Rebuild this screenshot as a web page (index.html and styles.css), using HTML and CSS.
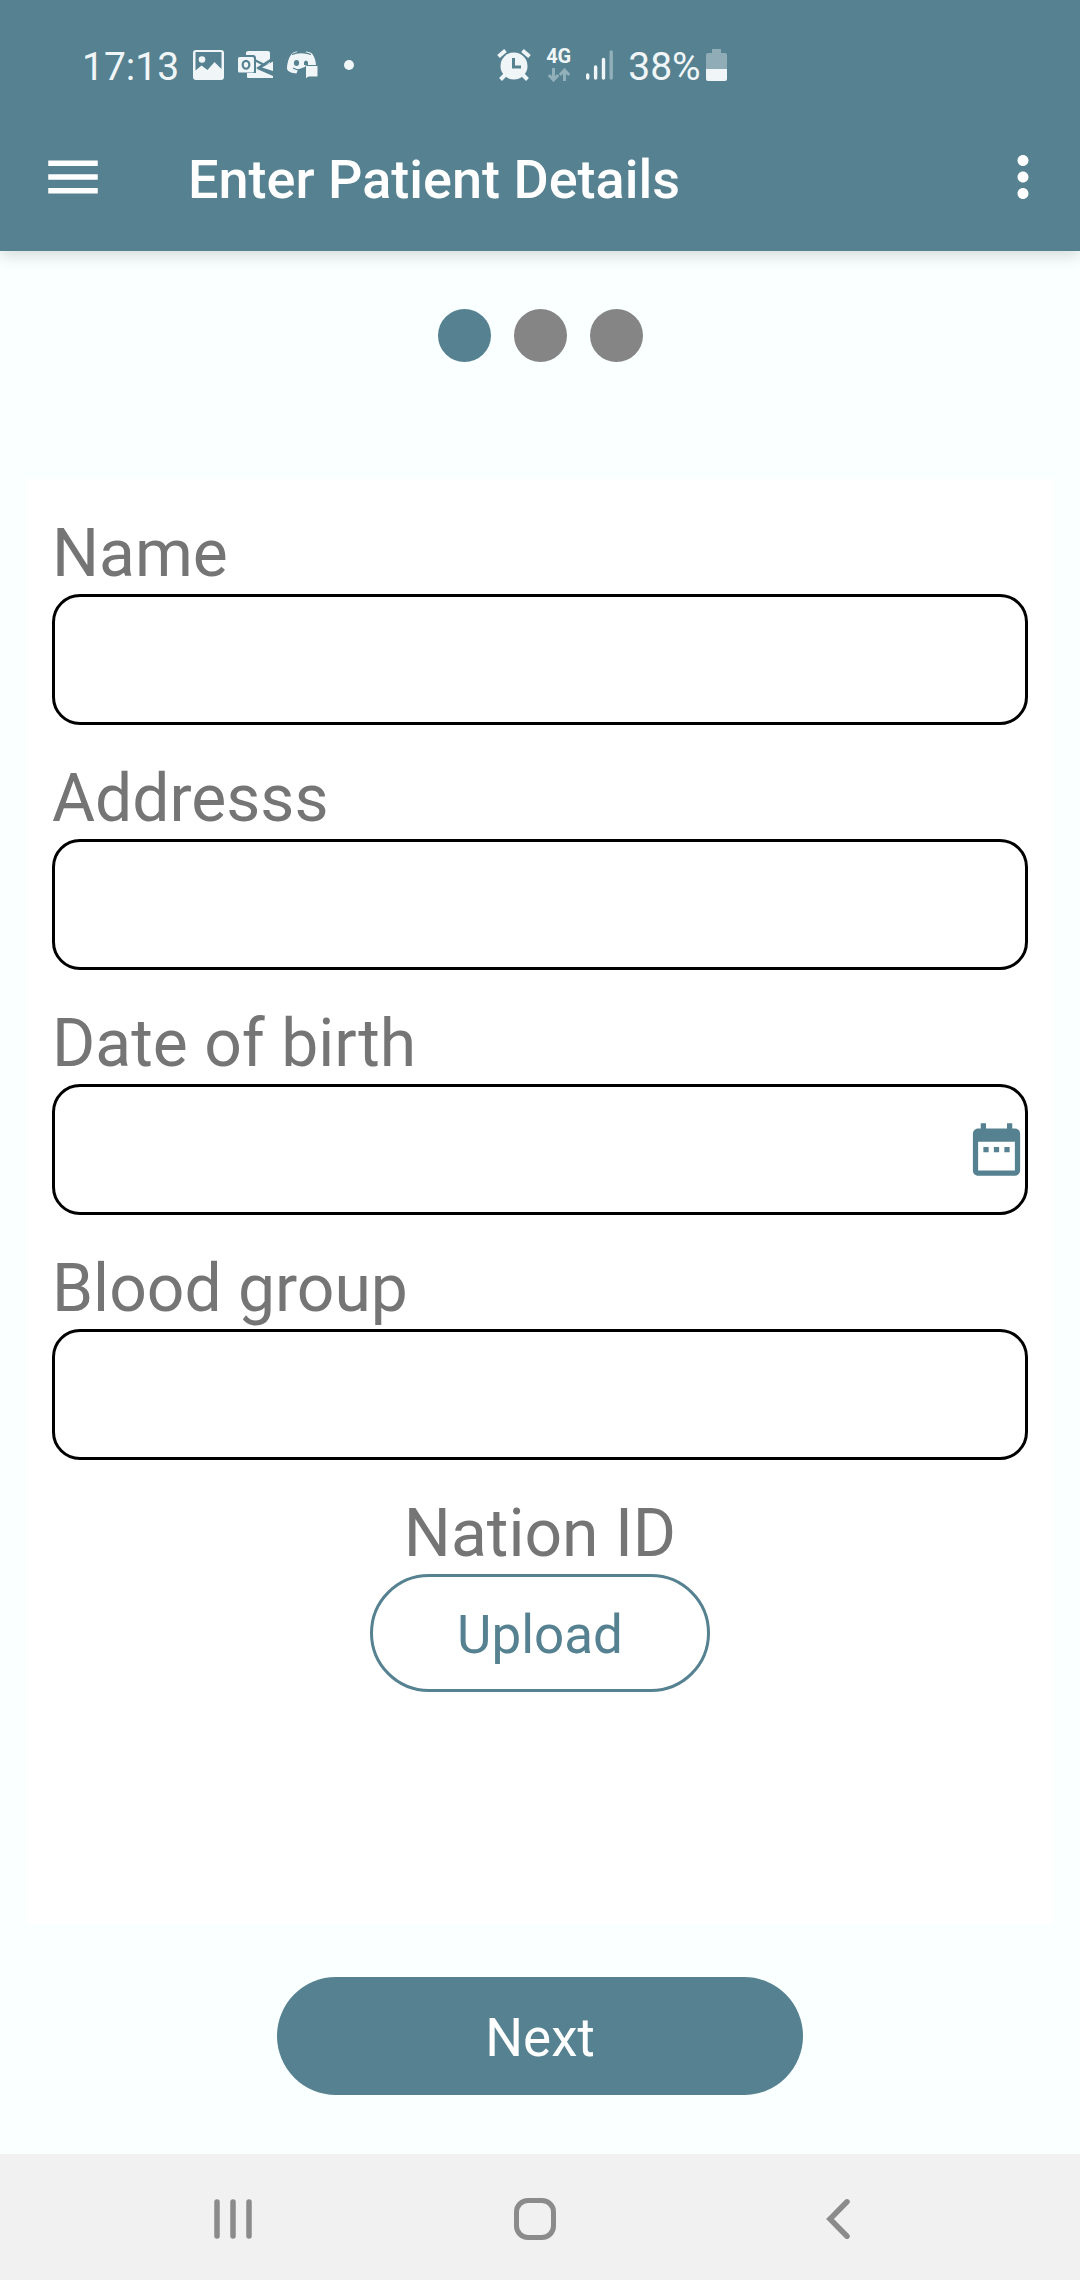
FILE: index.html
```html
<!DOCTYPE html>
<html lang="en">
<head>
  <meta charset="utf-8">
  <meta name="viewport" content="width=device-width, initial-scale=1">
  <title>Enter Patient Details</title>
  <link rel="stylesheet" href="styles.css">
</head>
<body class="screen">
  <header class="top">
    <div class="status">
      <div class="status-group">
        <span class="status-text">17:13</span>
        <svg width="31" height="30" viewBox="0 0 31 30" fill="currentColor" aria-hidden="true">
          <path fill-rule="evenodd" d="M3 0h25a3 3 0 0 1 3 3v24a3 3 0 0 1-3 3H3a3 3 0 0 1-3-3V3a3 3 0 0 1 3-3zM2.500 2v18.500l6-5 6 4.500 7-8 7 7V2z"/>
          <circle cx="9" cy="9.500" r="3.300"/>
        </svg>
        <svg width="35" height="28" viewBox="0 0 35 28" aria-hidden="true">
          <path fill="currentColor" d="M10 0h20a2 2 0 0 1 2 2v10l-13 6 15 9H10a1 1 0 0 1-1-1v-4h8V6H8V1z"/>
          <path fill="#558190" d="M17 8l18 9v2.500L17 10.500zM18 17l14-9v3L21 18.500z"/>
          <path fill="currentColor" d="M24 16.500l11-6v9.500zM19 18l16 7v2h-5z"/>
          <path fill="#558190" d="M8 4h7a3 3 0 0 1 3 3v15H8z"/>
          <rect y="6" width="16" height="15.500" rx="1.500" fill="currentColor"/>
          <ellipse cx="8" cy="13.700" rx="3.300" ry="3.900" fill="none" stroke="#558190" stroke-width="2.200"/>
        </svg>
        <svg width="31" height="28" viewBox="0 0 31 28" aria-hidden="true">
          <path fill="currentColor" d="M5 2.500C7 1 9 .5 10 .5l1 1.500h7L19 .5c2 0 5 1 6 2 3 4 4 8 4 13H19l-8 3-1.500 4C5 22 1 21 0 18 0 12 2 6 5 2.500z"/>
          <path d="M5 3.500q9-4 19 0M6 17q3 2 8 2" fill="none" stroke="#558190" stroke-width="1.300"/>
          <ellipse cx="9.500" cy="12" rx="2.600" ry="2.900" fill="#558190"/>
          <path fill="#558190" d="M17 11q2-3 4 0v3h-4z"/>
          <path fill="currentColor" stroke="#558190" stroke-width="1" d="M19.500 14.500H30a1 1 0 0 1 1 1V25a1 1 0 0 1-1 1h-8.500L18.500 28V15.500a1 1 0 0 1 1-1z"/>
        </svg>
        <svg width="34" height="10" viewBox="0 0 34 10" aria-hidden="true"><circle cx="17" cy="5" r="5" fill="currentColor"/></svg>
      </div>
      <div class="status-group status-group-wide">
        <svg width="34" height="32" viewBox="0 0 34 32" aria-hidden="true">
          <g stroke="currentColor" fill="none">
            <path d="M1.500 7.500l7-6M32.500 7.500l-7-6" stroke-width="4"/>
            <path d="M8 26l-4.500 4.500M26 26l4.500 4.500" stroke-width="4"/>
          </g>
          <circle cx="17" cy="17" r="13.500" fill="currentColor"/>
          <path d="M16.500 9v9h7.500" fill="none" stroke="#558190" stroke-width="3"/>
        </svg>
        <span class="network">
          <span class="network-type">4G</span>
          <svg width="22" height="14" viewBox="0 0 22 14" fill="none" stroke="#91b0ba" stroke-width="3" aria-hidden="true">
            <path d="M5.500 0v12M.8 7l4.700 5 4.700-5M16.500 13V2M11.800 7l4.700-5 4.700 5"/>
          </svg>
        </span>
        <svg width="27" height="30" viewBox="0 0 27 30" stroke-width="3.400" stroke-linecap="round" aria-hidden="true">
          <path stroke="currentColor" d="M1.700 25v3M9.600 17v11M17.500 9.500V28"/>
          <path stroke="#91b0ba" d="M25.200 2v26"/>
        </svg>
        <span class="battery">
          <span class="status-text">38%</span>
          <svg width="21" height="32" viewBox="0 0 21 32" aria-hidden="true">
            <path fill="#8facb7" d="M6 0h9v4h4a2 2 0 0 1 2 2v14H0V6a2 2 0 0 1 2-2h4z"/>
            <path fill="currentColor" d="M0 20h21v10a2 2 0 0 1-2 2H2a2 2 0 0 1-2-2z"/>
          </svg>
        </span>
      </div>
    </div>
    <div class="app-bar">
      <button class="icon-button" type="button" aria-label="Open menu">
        <svg width="66" height="66" viewBox="0 0 24 24" fill="currentColor"><path d="M3 18h18v-2H3v2zm0-5h18v-2H3v2zm0-7v2h18V6H3z"/></svg>
      </button>
      <h1 class="title">Enter Patient Details</h1>
      <button class="icon-button" type="button" aria-label="More options">
        <svg width="66" height="66" viewBox="0 0 24 24" fill="currentColor"><path d="M12 8c1.100 0 2-.9 2-2s-.9-2-2-2-2 .9-2 2 .9 2 2 2zm0 2c-1.100 0-2 .9-2 2s.9 2 2 2 2-.9 2-2-.9-2-2-2zm0 6c-1.100 0-2 .9-2 2s.9 2 2 2 2-.9 2-2-.9-2-2-2z"/></svg>
      </button>
    </div>
  </header>

  <form class="content">
    <div class="steps" role="img" aria-label="Step 1 of 3">
      <span class="step step-active"></span>
      <span class="step"></span>
      <span class="step"></span>
    </div>

    <div class="card">
      <div class="field">
        <label class="label" for="name">Name</label>
        <input class="input" id="name" type="text">
      </div>
      <div class="field">
        <label class="label" for="address">Addresss</label>
        <input class="input" id="address" type="text">
      </div>
      <div class="field">
        <label class="label" for="birth">Date of birth</label>
        <div class="date">
          <input class="input" id="birth" type="text">
          <svg class="date-icon" width="63" height="63" viewBox="0 0 24 24" fill="currentColor" aria-hidden="true"><path d="M9 11H7v2h2v-2zm4 0h-2v2h2v-2zm4 0h-2v2h2v-2zm2-7h-1V2h-2v2H8V2H6v2H5c-1.110 0-1.990.9-1.990 2L3 20c0 1.100.89 2 2 2h14c1.100 0 2-.9 2-2V6c0-1.100-.9-2-2-2zm0 16H5V9h14v11z"/></svg>
        </div>
      </div>
      <div class="field">
        <label class="label" for="blood">Blood group</label>
        <input class="input" id="blood" type="text">
      </div>
      <div class="field field-centered">
        <label class="label" for="upload">Nation ID</label>
        <button class="button button-outline" id="upload" type="button">Upload</button>
      </div>
    </div>

    <div class="actions">
      <button class="button button-filled" type="button">Next</button>
    </div>
  </form>

  <nav class="nav" aria-label="System">
    <button class="icon-button" type="button" aria-label="Recent apps">
      <svg width="42" height="42" viewBox="0 0 42 42" stroke="currentColor" stroke-width="5.500" stroke-linecap="round"><path d="M5 4v34M21 4v34M37 4v34"/></svg>
    </button>
    <button class="icon-button" type="button" aria-label="Home">
      <svg width="42" height="42" viewBox="0 0 42 42" fill="none" stroke="currentColor" stroke-width="5"><rect x="2.500" y="2.500" width="37" height="37" rx="11.500"/></svg>
    </button>
    <button class="icon-button" type="button" aria-label="Back">
      <svg width="42" height="42" viewBox="0 0 42 42" fill="none" stroke="currentColor" stroke-width="5.500" stroke-linecap="round"><path d="M30 3.800L13 21l17 17.200"/></svg>
    </button>
  </nav>
</body>
</html>
```
FILE: styles.css
```css
:root {
  --primary: #558190;
  --page: #faffff;
  --label: #757575;
  --gutter: 26px;
}

* {
  box-sizing: border-box;
}

.screen {
  display: flex;
  flex-direction: column;
  min-height: 100vh;
  margin: 0;
  background: var(--page);
  font-family: Roboto, "Noto Sans", sans-serif;
}

.top {
  background: var(--primary);
  color: #fff;
  box-shadow: 0 4px 16px rgba(0, 0, 0, 0.16);
}

.status {
  display: flex;
  align-items: center;
  gap: 131px;
  height: 97px;
  padding: 32px 82px 0;
  color: #f0f6f8;
  font-size: 39px;
  line-height: 48px;
}

.status-group {
  display: flex;
  align-items: center;
  gap: 14px;
}

.status-group-wide {
  gap: 15px;
}

.status-text {
  padding-top: 4px;
}

.network {
  display: flex;
  flex-direction: column;
  align-items: center;
  gap: 4px;
}

.network-type {
  font-size: 20px;
  font-weight: 700;
  line-height: 16px;
}

.battery {
  display: flex;
  align-items: center;
  gap: 5px;
}

.app-bar {
  display: flex;
  align-items: center;
  height: 154px;
  padding: 6px 24px 0 40px;
}

.icon-button {
  display: flex;
  padding: 0;
  border: 0;
  background: none;
  color: inherit;
}

.title {
  flex: 1;
  margin: 0;
  padding: 6px 0 0 82px;
  font-size: 54px;
  font-weight: 500;
  line-height: 64px;
}

.content {
  display: flex;
  flex: 1;
  flex-direction: column;
}

.steps {
  display: flex;
  justify-content: center;
  gap: 23px;
  padding: 58px 0 117px;
}

.step {
  width: 53px;
  height: 53px;
  border-radius: 50%;
  background: #858585;
}

.step-active {
  background: var(--primary);
}

.card {
  display: flex;
  flex: 1;
  flex-direction: column;
  gap: 35px;
  margin: 0 var(--gutter);
  padding: 36px var(--gutter);
  background: #fff;
}

.field {
  display: flex;
  flex-direction: column;
}

.field-centered {
  align-items: center;
}

.label {
  padding-bottom: 2px;
  color: var(--label);
  font-size: 66px;
  line-height: 77px;
}

.input {
  width: 100%;
  height: 131px;
  padding: 0 28px;
  border: 3px solid #000;
  border-radius: 28px;
  background: #fff;
  font: inherit;
  font-size: 53px;
}

.date {
  position: relative;
}

.date-icon {
  position: absolute;
  top: 34px;
  right: 0;
  color: var(--primary);
}

.button {
  height: 118px;
  padding: 4px 84px 0;
  border-radius: 59px;
  font-family: inherit;
  font-size: 53px;
  line-height: 64px;
}

.button-outline {
  border: 3px solid var(--primary);
  background: #fff;
  color: var(--primary);
}

.button-filled {
  width: 526px;
  border: 0;
  background: var(--primary);
  color: #fff;
}

.actions {
  display: flex;
  justify-content: center;
  padding: 53px 0 59px;
}

.nav {
  display: flex;
  align-items: center;
  justify-content: space-between;
  height: 126px;
  padding: 4px 20.5% 0 19.6%;
  background: #f1f1f1;
  color: #8b8b8b;
}
```
